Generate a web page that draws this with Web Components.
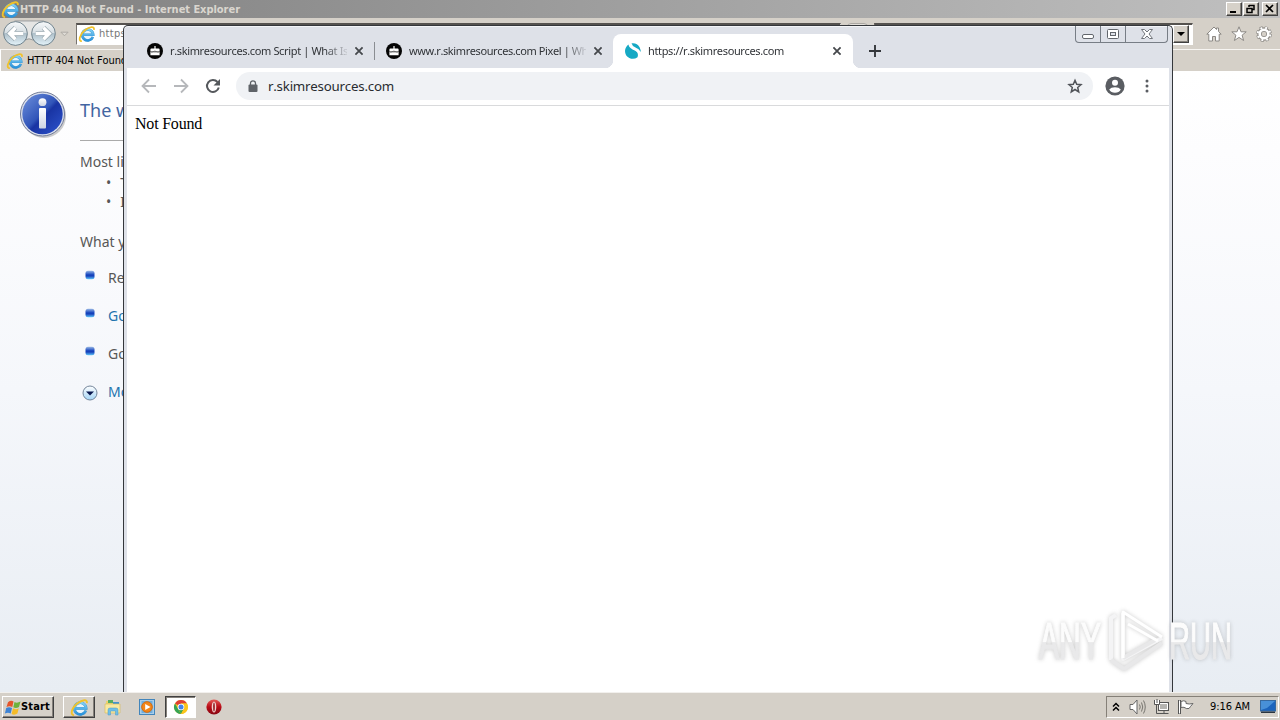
<!DOCTYPE html>
<html lang="en">
<head>
<meta charset="utf-8">
<title>Desktop</title>
<style>html,body{margin:0;width:1280px;height:720px;overflow:hidden}</style>
</head>
<body>
<desk-top></desk-top>
<script>
const define = (name, css, html, init) => {
  const t = document.createElement('template');
  t.innerHTML = `<style>*{box-sizing:border-box}${css}</style>${html}`;
  customElements.define(name, class extends HTMLElement {
    constructor(){ super(); this.attachShadow({mode:'open'}).append(t.content.cloneNode(true)); }
    connectedCallback(){ if(init) init(this, this.shadowRoot); }
  });
};

const icons = {
  ie:['0 0 18 18','<defs><linearGradient id="g" x2="0" y2="1"><stop stop-color="#7fd0f6"/><stop offset="1" stop-color="#2a93dc"/></linearGradient></defs><circle cx="9.800" cy="9.800" r="5.500" fill="#e8f4fa"/><path d="M15.600 12.300A6.200 6.200 0 1 1 16 9.900H5" fill="none" stroke="#3c93cb" stroke-width="2.900"/><path d="M15.600 12.300A6.200 6.200 0 1 1 16 9.900H5" fill="none" stroke="url(#g)" stroke-width="2.200"/><path d="M3.200 17C-1 17.500 .2 10 6.500 4.800 12 .6 17.700-.3 16.800 4.400" fill="none" stroke="#f0c22b" stroke-width="2"/>'],
  cake:['0 0 16 16','<circle cx="8" cy="8" r="8" fill="#050505"/><path d="M7.400 3h1.200v2.600h3q1 0 1 1v1.700H3.400V6.600q0-1 1-1h3zM3.400 9.300h9.200v3H3.400z" fill="#fff"/><path d="M3.400 8.300v1.200q1.500.9 3 0t3 0 3.200 0V8.300z" fill="#ddd"/><path d="M3.400 8.600q1.500 1 3 0t3 0 3.200 0" stroke="#222" stroke-width=".6" fill="none"/>'],
  skim:['0 0 16 16','<path d="M3.500 1.500C4 5 7 6 10.600 8 13 9.500 13.500 12 12.500 14.200A7.800 7.800 0 0 1 0 8Q.2 4 3.500 1.500Z" fill="#16a9c4"/><path d="M6.500.3Q12-.5 14.600 4.300 15.800 7 15.800 9 14 5.600 10.500 4.500 7.200 3.200 6.500.3" fill="#16a9c4"/>'],
  x:['0 0 10 10','<path d="M1.400 1.400l7.200 7.200m0-7.200L1.400 8.600" stroke="#45484c" stroke-width="1.800"/>'],
  plus:['0 0 12 12','<path d="M6 0v12M0 6h12" stroke="#34373b" stroke-width="1.900"/>'],
  back:['0 0 16 16','<path d="M15 8H2M8 1.500L1.500 8 8 14.500" fill="none" stroke="#b6b8bb" stroke-width="1.800"/>'],
  fwd:['0 0 16 16','<path d="M1 8h13M8 1.500L14.500 8 8 14.500" fill="none" stroke="#b6b8bb" stroke-width="1.800"/>'],
  reload:['0 0 16 16','<path d="M13.800 9.500A6 6 0 1 1 12.500 4" fill="none" stroke="#55585c" stroke-width="2"/><path d="M15 1v6.500H8.500z" fill="#55585c"/>'],
  lock:['0 0 10 12','<path d="M2.500 5V3.300a2.500 2.500 0 0 1 5 0V5" fill="none" stroke="#5f6368" stroke-width="1.300"/><rect x=".5" y="4.500" width="9" height="7.500" rx="1" fill="#5f6368"/>'],
  star:['0 0 16 16','<path d="M8 2.300l1.700 4 4.300.4-3.300 2.800 1 4.300L8 11.500l-3.700 2.300 1-4.300L2 6.700l4.300-.4z" fill="none" stroke="#515459" stroke-width="1.500"/>'],
  user:['0 0 20 20','<circle cx="10" cy="10" r="9.600" fill="#5a5d62"/><circle cx="10" cy="6.800" r="3" fill="#fff"/><path d="M4.200 13.600Q6 11.300 10 11.300t5.800 2.300Q14 16.800 10 16.800t-5.800-3.200" fill="#fff"/>'],
  dots:['0 0 4 16','<g fill="#5a5d62"><circle cx="2" cy="3" r="1.500"/><circle cx="2" cy="8" r="1.500"/><circle cx="2" cy="13" r="1.500"/></g>'],
  navs:['0 0 56 28','<defs><linearGradient id="a" x2="0" y2="1"><stop stop-color="#f8fafb"/><stop offset=".48" stop-color="#d5dde2"/><stop offset=".5" stop-color="#aebfc9"/><stop offset="1" stop-color="#e4f3fa"/></linearGradient></defs><path d="M13 1h30a13 13 0 0 1 0 25q-6 0-10-5-5-3-10 0-4 5-10 5" fill="#e5e5e4" stroke="#96999b"/><g stroke="#6c7f89"><circle cx="14" cy="14" r="12.300" fill="url(#a)"/><circle cx="43" cy="14" r="12.300" fill="url(#a)"/></g><g fill="none" stroke="#98a7af" stroke-width="5"><path d="M22 14H8m6-6l-6 6 6 6M35 14h14m-6-6l6 6-6 6"/></g><g fill="none" stroke="#fff" stroke-width="3.600"><path d="M22 14H8m6-6l-6 6 6 6M35 14h14m-6-6l6 6-6 6"/></g>'],
  drop:['0 0 10 6','<path d="M1 1h8L5 5z" fill="#dedbd5" stroke="#aaa7a2"/>'],
  home:['0 0 16 16','<path d="M8 1L.8 8.200h2V15h3.700v-4.500h3V15h3.700V8.200h2L12.500 5.500V2h-2v1.500z" fill="#fff" stroke="#8c8985"/>'],
  fav:['0 0 16 16','<path d="M8 .8l2 5h5.200l-4.100 3.400 1.500 5.300L8 11.400l-4.600 3.100 1.500-5.300L.8 5.800H6z" fill="#fff" stroke="#8c8985"/>'],
  gear:['0 0 16 16','<circle cx="8" cy="8" r="6.300" fill="none" stroke="#8c8985" stroke-width="3.200" stroke-dasharray="2.900 2.048"/><circle cx="8" cy="8" r="4.500" fill="none" stroke="#8c8985" stroke-width="4.500"/><circle cx="8" cy="8" r="6.300" fill="none" stroke="#fff" stroke-width="2" stroke-dasharray="1.900 3.048" stroke-dashoffset="-.5"/><circle cx="8" cy="8" r="4.300" fill="none" stroke="#fff" stroke-width="2.600"/>'],
  info:['0 0 50 50','<defs><linearGradient id="i" x2="1" y2="1"><stop stop-color="#6f92dd"/><stop offset=".48" stop-color="#3155b9"/><stop offset=".55" stop-color="#1934a3"/><stop offset="1" stop-color="#2e55cf"/></linearGradient><linearGradient id="w" x2="0" y2="1"><stop stop-color="#fff"/><stop offset="1" stop-color="#ccd4e3"/></linearGradient></defs><circle cx="26" cy="26" r="22" fill="#aaa" opacity=".6"/><circle cx="24.500" cy="24" r="22" fill="#dbe0ec" stroke="#717b98"/><circle cx="24.500" cy="24" r="20.200" fill="url(#i)"/><circle cx="24.500" cy="12.200" r="3.900" fill="url(#w)"/><rect x="21" y="18" width="7" height="20.500" rx="1" fill="url(#w)"/>'],
  bullet:['0 0 10 10','<defs><linearGradient id="b" x2="0" y2="1"><stop stop-color="#9dbbe6"/><stop offset=".45" stop-color="#1b4ac0"/><stop offset=".6" stop-color="#123cb8"/><stop offset="1" stop-color="#62c9fb"/></linearGradient></defs><rect x=".5" y=".7" width="9" height="8.600" rx="2.500" fill="url(#b)"/>'],
  more:['0 0 16 16','<defs><linearGradient id="m" x2="0" y2="1"><stop stop-color="#fff"/><stop offset="1" stop-color="#a3d4f5"/></linearGradient></defs><circle cx="8" cy="8" r="7" fill="url(#m)" stroke="#74869b"/><path d="M4 6.500h8L8 10.500z" fill="#07164d"/>'],
  win:['0 0 16 15','<path d="M3 2.200Q6-.2 8.500 1.500L7.300 7Q4.500 5.500 1.500 7z" fill="#e5552b"/><path d="M9.500 2Q12 3.500 15.500 1.500L14 7Q11 9 8.300 7.300z" fill="#6fb23c"/><path d="M1.200 8Q4 6.500 7 8L5.700 13.500Q3 12-.1 13.500z" fill="#3d83d5"/><path d="M8 8.300Q11 10 13.800 8.200L12.400 13.500Q9.500 15.500 6.600 14z" fill="#f5bc29"/>'],
  folder:['0 0 18 18','<path d="M2 3h5l1 2h7v9H2z" fill="#ecd36e"/><path d="M4 2h5v3H4z" fill="#54ad62"/><path d="M9 4h6v3H9z" fill="#4194d0"/><path d="M1 6h15v9H1z" fill="#f8e9a1" stroke="#d7bb59" stroke-width=".6"/><path d="M4 17v-5q0-2 2-2h6q2 0 2 2v5h-2.500v-4h-5v4z" fill="#6fbfe7" stroke="#4a9ac5" stroke-width=".5"/>'],
  media:['0 0 16 16','<rect x=".5" y=".5" width="15" height="15" fill="#a8cde9" stroke="#4285bb"/><rect x="2.500" y="2" width="11" height="12" fill="#6caddf"/><circle cx="8" cy="8" r="5.300" fill="#f28518" stroke="#d66b0c"/><path d="M6.200 4.900v6.200L11.500 8z" fill="#fff"/>'],
  chrome:['0 0 16 16','<circle cx="8" cy="8" r="6.900" fill="#fbc51c"/><path d="M8 8L2 4.500A6.900 6.900 0 0 1 14 4.500H8z" fill="#df4033"/><path d="M2 4.500L8 15A6.900 6.900 0 0 1 2 4.500" fill="#35a455"/><path d="M8 8L5.200 9.600 8 14.900 11 9.500z" fill="#35a455"/><path d="M11 9.500L8 14.900A6.900 6.900 0 0 0 14 4.500H8z" fill="#fbc51c"/><circle cx="8" cy="8" r="3.300" fill="#fff"/><circle cx="8" cy="8" r="2.500" fill="#4483ea"/>'],
  opera:['0 0 16 16','<defs><linearGradient id="o" x2="0" y2="1"><stop stop-color="#e55b57"/><stop offset=".5" stop-color="#b80b16"/><stop offset="1" stop-color="#870713"/></linearGradient></defs><circle cx="8" cy="8" r="7.600" fill="url(#o)"/><ellipse cx="8" cy="8" rx="2.300" ry="5.600" fill="#f3d5d1"/><ellipse cx="8" cy="8" rx=".8" ry="4.500" fill="#8e0d15"/>'],
  chev:['0 0 8 10','<path d="M1 4.500l3-3 3 3M1 8.500l3-3 3 3" fill="none" stroke="#000" stroke-width="1.500"/>'],
  sound:['0 0 18 16','<path d="M1 5.500h3l4-4.500v14l-4-4.500H1z" fill="#fff" stroke="#666"/><path d="M10.500 5.500q1.500 2.500 0 5m2-7q2.500 4.500 0 9m2-11q3.500 6.500 0 13" fill="none" stroke="#77756f"/>'],
  net:['0 0 18 16','<rect x="5.500" y="3.500" width="10" height="8" fill="#b5b4b1" stroke="#555"/><path d="M6.500 4.500h8v6h-8z" fill="none" stroke="#fff"/><path d="M7 14.500h8.500M11 11.500v3M3.500 6v8.500h4" fill="none" stroke="#555"/><path d="M1.500 1v4.500h5V1" fill="#fff" stroke="#555"/><path d="M4 0v4" stroke="#555"/>'],
  flag:['0 0 18 16','<path d="M2.500 1v14" stroke="#555" stroke-width="3"/><path d="M2.500 1.500v13" stroke="#fff" stroke-width="1"/><path d="M4 2.500q3-1.500 5 0v2q3 1 7 0l-2.500 3L12 9.500q-3.500.5-4-.8-2-1-4 0z" fill="#fff" stroke="#666"/>'],
  monitor:['0 0 16 14','<rect x=".5" y=".5" width="15" height="10.500" fill="#1c64bd" stroke="#37699f"/><path d="M1 1h14L7 8 1 10z" fill="#61a7e7" opacity=".65"/><path d="M1 13h14v-1.500H1z" fill="#2a3541"/>']
};
define('ui-icon',':host{display:block;flex:none}svg{display:block;width:100%;height:100%;overflow:visible}','<svg></svg>',(h,r)=>{
  const [box,body]=icons[h.getAttribute('name')];
  h.style.width=h.getAttribute('w')+'px';
  h.style.height=(h.getAttribute('h')||h.getAttribute('w'))+'px';
  const s=r.querySelector('svg'); s.setAttribute('viewBox',box); s.innerHTML=body;
});

/* A single line of text tracked to an exact advance width. */
define('ui-label',':host{display:block;flex:none;white-space:nowrap}span{display:inline-block;font-kerning:none}','<span><slot></slot></span>',(h,r)=>{
  const s=r.querySelector('span'), w=+h.getAttribute('w');
  if(w) s.style.letterSpacing=(w-s.getBoundingClientRect().width)/h.textContent.length+'px';
});

define('classic-button',':host{display:flex;align-items:center;justify-content:center;flex:none;background:#d6d1c9;border:1px solid;border-color:#fff #404040 #404040 #fff;box-shadow:inset -1px -1px #85817b}svg{display:block}','<slot></slot>');

define('ie-page',`:host{display:grid;grid-template-columns:80px 400px 1fr;background:linear-gradient(#fff 0,#fdfdfe 80px,#f5f7fb 320px,#e8edf3 100%);font:14px/20px "Noto Sans",sans-serif;color:#575757;overflow:hidden}
.i{padding:19px 0 0 18px}h1{margin:0;height:70px;padding-top:26px;border-bottom:1px solid #aaa;font:400 18px/26px "Noto Sans",sans-serif;color:#4265a1}
.most{padding-top:11px;height:32px}.dots div{display:flex;gap:9px;padding-left:26px;height:19px;line-height:19px}.dots{height:50px}.what{padding-top:9px;height:45px;line-height:20px}
.r{display:flex;gap:12px;padding-left:5px;height:38px;line-height:20px;align-items:flex-start}.r ui-icon{margin:2px 1px 0 0}.b{color:#2273ae}.r:last-child ui-icon{margin:3px -2px 0 -3px}`,
`<div class="i"><ui-icon name="info" w="50"></ui-icon></div><main><h1>The w</h1><div class="most">Most li</div><div class="dots"><div><span>•</span><span>T</span></div><div><span>•</span><span>I</span></div></div><div class="what">What y</div>
<div class="r"><ui-icon name="bullet" w="10"></ui-icon>Re</div><div class="r b"><ui-icon name="bullet" w="10"></ui-icon>Go</div><div class="r"><ui-icon name="bullet" w="10"></ui-icon>Go</div><div class="r b"><ui-icon name="more" w="16"></ui-icon>Mo</div></main>`);

define('ie-window',`:host{display:flex;flex-direction:column;height:692px;font:11px/16px "DejaVu Sans Condensed","DejaVu Sans",sans-serif;background:#d5d0c8}
.title{height:18px;display:flex;align-items:center;padding:0 2px 0 2px;gap:1px;background:linear-gradient(90deg,#808080,#c0c0c0);color:#dad6cf;font-weight:bold}.title ui-label{padding-top:1px}.sp{flex:1}.title classic-button{width:16px;height:14px}.title .c{margin-left:2px}
.nav{height:31px;display:flex;align-items:center;padding:0 8px 0 2px}.nav .dr{margin:0 7px 0 4px}.field{flex:none;height:22px;border:1px solid #77736e;border-top:2px solid #55524f;border-right-color:#fff;border-bottom-color:#fff;background:#fff;display:flex;align-items:center;padding:0 1px 0 2px;gap:4px;color:#777}.addr{width:765px}.find{width:319px}.go{width:34px;height:22px;padding:0 6px}.go div{height:22px;border:1px solid #aaa7a2;border-radius:4px;background:#e2dfda}.field classic-button{width:16px;height:18px;margin-left:auto;margin-right:2px}
.tools{display:flex;gap:9px;margin-left:13px}
.tab{height:22px;display:flex;align-items:center;padding-left:6px;gap:4px;border-top:1px solid #f7f5f2;border-left:1px solid #fff;color:#000}
ie-page{flex:1}`,
`<div class="title"><ui-icon name="ie" w="17"></ui-icon><ui-label w="220">HTTP 404 Not Found - Internet Explorer</ui-label><span class="sp"></span>
<classic-button><svg width="12" height="10"><path d="M2 8h6" stroke="#000" stroke-width="2"/></svg></classic-button><classic-button><svg width="12" height="10"><path d="M4 1.500h5v4H7M4 1v2M2 4.500h5v4H2z" fill="none" stroke="#000" stroke-width="1.500"/></svg></classic-button><classic-button class="c"><svg width="12" height="10"><path d="M2 1l7 7m0-7L2 8" stroke="#000" stroke-width="1.700"/></svg></classic-button></div>
<div class="nav"><ui-icon name="navs" w="54" h="27"></ui-icon><ui-icon class="dr" name="drop" w="9" h="6"></ui-icon><div class="field addr"><ui-icon name="ie" w="16"></ui-icon><ui-label w="27">https</ui-label></div><div class="go"><div></div></div><div class="field find"><classic-button><svg width="8" height="5"><path d="M0 0h8L4 4z"/></svg></classic-button></div><div class="tools"><ui-icon name="home" w="16"></ui-icon><ui-icon name="fav" w="16"></ui-icon><ui-icon name="gear" w="16"></ui-icon></div></div>
<div class="tab"><ui-icon name="ie" w="16"></ui-icon><ui-label w="100">HTTP 404 Not Found</ui-label></div><ie-page></ie-page>`);

define('chrome-tab',`:host{display:flex;align-items:center;width:239px;height:34px;padding:0 10px 0 12px;gap:7px;font:11px/16px "Noto Sans",sans-serif;color:#303337;position:relative;flex:none}
.t{flex:1;overflow:hidden;-webkit-mask:linear-gradient(90deg,#000 154px,transparent 180px);mask:linear-gradient(90deg,#000 154px,transparent 180px)}
:host([active]){width:240px;background:#fff;border-radius:8px 8px 0 0;padding-right:11px}:host([active])::before,:host([active])::after{content:"";position:absolute;bottom:0;width:8px;height:8px}:host([active])::before{left:-8px;background:radial-gradient(circle at 0 0,transparent 8px,#fff 8.500px)}:host([active])::after{right:-8px;background:radial-gradient(circle at 100% 0,transparent 8px,#fff 8.500px)}
i{display:none}:host([sep]) i{display:block;position:absolute;right:-1px;top:8px;width:1px;height:18px;background:#8a8d92}`,
`<slot name="icon"></slot><div class="t"><slot></slot></div><ui-icon name="x" w="10"></ui-icon><i></i>`);

define('chrome-window',`:host{display:flex;flex-direction:column;border:1px solid #34373b;border-bottom:0;border-radius:5px 5px 0 0;background:#dee1e8;overflow:hidden;box-shadow:inset 0 1px #f4f5f7}
.strip{height:42px;display:flex;align-items:flex-end;padding-left:11px}.plus{margin:0 0 11px 16px}.sp{flex:1}
.ctl{align-self:flex-start;display:flex;width:93px;height:17px;border:1px solid #777d85;border-top:0;border-radius:0 0 4px 4px;margin-right:4px}.ctl div{flex:25;display:flex;align-items:center;justify-content:center}.ctl div+div{border-left:1px solid #777d85}.ctl div:last-child{flex:42}
.body{flex:1;margin:0 3px 0 3px;background:#fff;display:flex;flex-direction:column}.bar{height:38px;border-bottom:1px solid #d9dadc;display:flex;align-items:center;padding:0 20px 1px 14px}.bar>ui-icon+ui-icon{margin-left:16px}
.omni{flex:1;margin:0 12px 0 15px;height:28px;background:#f0f2f5;border-radius:14px;display:flex;align-items:center;padding:0 10px 0 12px;font:13.300px/20px "Noto Sans",sans-serif;color:#292c30}.omni ui-label{margin-left:10px}
.page{padding:8px;font:16px/20px "Liberation Serif",serif;color:#000}`,
`<div class="strip"><chrome-tab sep><ui-icon slot="icon" name="cake" w="16"></ui-icon><ui-label w="178">r.skimresources.com Script | What Is</ui-label></chrome-tab><chrome-tab><ui-icon slot="icon" name="cake" w="16"></ui-icon><ui-label w="179">www.r.skimresources.com Pixel | Wh</ui-label></chrome-tab><chrome-tab active><ui-icon slot="icon" name="skim" w="16"></ui-icon><ui-label w="136">https://r.skimresources.com</ui-label></chrome-tab><ui-icon class="plus" name="plus" w="12"></ui-icon><span class="sp"></span>
<div class="ctl"><div><svg width="12" height="12"><rect x=".5" y="6.500" width="11" height="4" rx="1.500" fill="#fff" stroke="#62666c"/></svg></div><div><svg width="12" height="10"><rect x=".5" y=".5" width="11" height="9" rx="1" fill="#fff" stroke="#62666c"/><rect x="3.500" y="3.500" width="5" height="3" fill="#dee1e8" stroke="#62666c"/></svg></div><div><svg width="12" height="10"><path d="M.5.500h3L6 3 8.500.500h3L8 5l3.500 4.500h-3L6 7 3.500 9.500h-3L4 5z" fill="#fff" stroke="#72767c"/></svg></div></div></div>
<div class="body"><div class="bar"><ui-icon name="back" w="16"></ui-icon><ui-icon name="fwd" w="16"></ui-icon><ui-icon name="reload" w="16"></ui-icon><div class="omni"><ui-icon name="lock" w="10" h="12"></ui-icon><ui-label w="126">r.skimresources.com</ui-label><span class="sp"></span><ui-icon name="star" w="16"></ui-icon></div><ui-icon name="user" w="20"></ui-icon><ui-icon name="dots" w="4" h="16" style="margin-left:20px"></ui-icon></div><div class="page"><ui-label w="67">Not Found</ui-label></div></div>`);

define('task-bar',`:host{display:flex;align-items:center;height:28px;background:#d5d0c8;border-top:1px solid #f2f0ed;padding:1px 1px 0 2px;font:11px/16px "DejaVu Sans Condensed","DejaVu Sans",sans-serif;color:#000}
.start{width:52px;height:22px;font-weight:bold;gap:0}.start ui-label{margin-right:1px}.ie{width:32px;height:22px;margin-left:9px}.f{margin-left:9px}.m{margin-left:17px}.ch{width:31px;height:22px;margin:0 10px;background:#fff;border:1px solid;border-color:#404040 #fff #fff #404040;box-shadow:inset 1px 1px #85817b;display:flex;align-items:center;justify-content:center}.sp{flex:1}
.tray{width:173px;height:22px;border:1px solid;border-color:#858078 #fff #fff #858078;display:flex;align-items:center;padding:0 2px 0 5px}.tray ui-label{margin:0 10px 0 15px}`,
`<classic-button class="start"><ui-icon name="win" w="16" h="15"></ui-icon><ui-label w="29">Start</ui-label></classic-button><classic-button class="ie"><ui-icon name="ie" w="17"></ui-icon></classic-button><ui-icon class="f" name="folder" w="18"></ui-icon><ui-icon class="m" name="media" w="16"></ui-icon><div class="ch"><ui-icon name="chrome" w="16"></ui-icon></div><ui-icon name="opera" w="16"></ui-icon><span class="sp"></span>
<div class="tray"><ui-icon name="chev" w="8" h="10"></ui-icon><ui-icon name="sound" w="18" h="16" style="margin-left:9px"></ui-icon><ui-icon name="net" w="18" h="16" style="margin-left:6px"></ui-icon><ui-icon name="flag" w="18" h="16" style="margin-left:6px"></ui-icon><ui-label w="40">9:16 AM</ui-label><ui-icon name="monitor" w="16" h="14"></ui-icon></div>`);

define('any-run',`:host{display:block}svg{display:block;overflow:visible;filter:drop-shadow(0 0 2px #7776)}text{font:51px "Liberation Sans",sans-serif}`,
`<svg width="212" height="76" viewBox="0 0 212 76"><defs><linearGradient id="f" x2="0" y2="1"><stop offset=".5" stop-color="#fcfcfc"/><stop offset=".52" stop-color="#e9e9ea"/></linearGradient></defs><g fill="url(#f)" stroke="url(#f)" stroke-width="1.200"><text x="9" y="55" textLength="62" lengthAdjust="spacingAndGlyphs">ANY</text><text x="139" y="55" textLength="63" lengthAdjust="spacingAndGlyphs">RUN</text></g><g fill="none" stroke-width="4" stroke-linejoin="round"><path d="M81 56V14l5-3M93 9v46L132 34" stroke="#f4f4f5"/><path d="M81 56l13 9 38-26M93 54l32-18" stroke="#e8e8e9"/><path d="M93 54V8l39 25M98 20l30 17" stroke="#fff" stroke-width="3"/></g></svg>`);

define('desk-top',`:host{display:flex;flex-direction:column;width:1280px;height:720px;position:relative;overflow:hidden}chrome-window{position:absolute;left:123px;top:25px;width:1050px;height:667px}any-run{position:absolute;left:1030px;top:604px}`,
`<ie-window></ie-window><chrome-window></chrome-window><task-bar></task-bar><any-run></any-run>`);
</script>
</body>
</html>
